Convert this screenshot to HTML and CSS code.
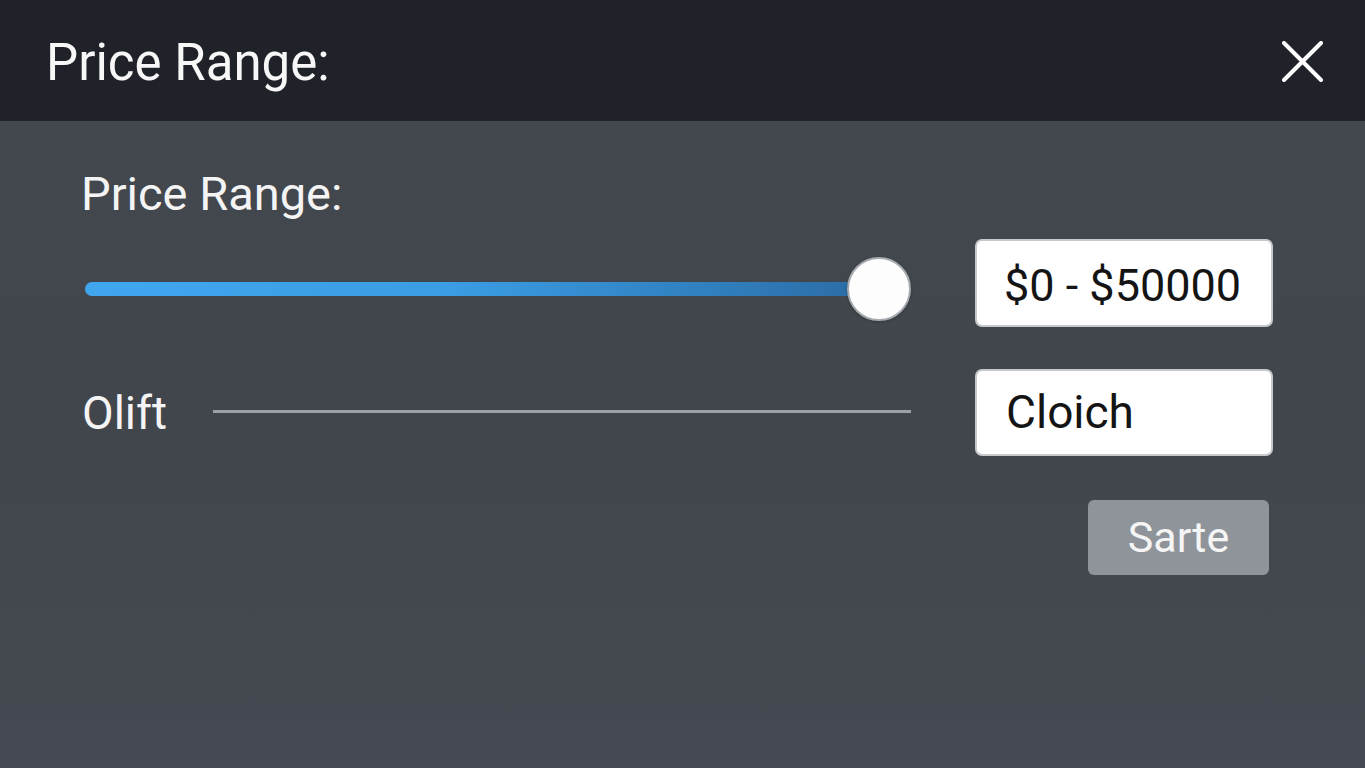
FILE: index.html
```html
<!DOCTYPE html>
<html lang="en">
<head>
<meta charset="utf-8">
<title>Price Range</title>
<link rel="stylesheet" href="styles.css">
</head>
<body>
<div class="dialog">
  <header class="header">
    <h1 class="title">Price Range:</h1>
    <button class="close" aria-label="Close">
      <svg width="41" height="41" viewBox="0 0 41 41"><path d="M2 2 L39 39 M39 2 L2 39" stroke="#ffffff" stroke-width="4" stroke-linecap="round" fill="none"/></svg>
    </button>
  </header>
  <main class="content">
    <div class="section-label">Price Range:</div>
    <div class="row row-slider">
      <div class="slider">
        <div class="track"></div>
        <div class="thumb"></div>
      </div>
      <div class="field field-1">$0 - $50000</div>
    </div>
    <div class="row row-line">
      <div class="line-group">
        <span class="row-label">Olift</span>
        <div class="rule"></div>
      </div>
      <div class="field field-2">Cloich</div>
    </div>
    <div class="actions">
      <button class="btn">Sarte</button>
    </div>
  </main>
</div>
</body>
</html>
```
FILE: styles.css
```css
* { box-sizing: border-box; }
html, body { margin: 0; padding: 0; }
body {
  width: 1365px;
  height: 768px;
  overflow: hidden;
  font-family: Roboto, "Liberation Sans", Arial, sans-serif;
  background: linear-gradient(180deg, #444950 0%, #41464d 55%, #454a52 100%);
}
.dialog { width: 1365px; height: 768px; }
.header {
  height: 121px;
  background: #1f2329;
  display: flex;
  justify-content: space-between;
  align-items: flex-start;
  padding: 33px 42px 0 46px;
}
.title {
  margin: 0;
  font-size: 51px;
  line-height: 60px;
  font-weight: 400;
  color: #f7f7f7;
}
.close {
  margin-top: 8px;
  padding: 0;
  border: 0;
  background: transparent;
  width: 41px;
  height: 41px;
  display: block;
}
.close svg { display: block; }
.content {
  padding: 46px 92px 0 81px;
}
.section-label {
  font-size: 47px;
  line-height: 54px;
  color: #f4f4f4;
  margin-bottom: 18px;
}
.row {
  display: grid;
  grid-template-columns: 830px 298px;
  column-gap: 64px;
}
.row-slider { align-items: start; }
.slider {
  margin-top: 18px;
  height: 64px;
  display: flex;
  align-items: center;
}
.track {
  flex: 1;
  height: 14px;
  margin-left: 4px;
  border-radius: 7px;
  background: linear-gradient(90deg, #40a7ee 0%, #3b9de4 45%, #3182c2 75%, #2b6aa1 100%);
}
.thumb {
  width: 64px;
  height: 64px;
  margin-left: -40px;
  border-radius: 50%;
  background: #fdfdfd;
  border: 2px solid #a7abb0;
  box-shadow: 0 1px 3px rgba(0,0,0,0.25);
}
.field {
  background: #ffffff;
  border: 2px solid #c6c8cb;
  border-radius: 7px;
  color: #141414;
  line-height: 54px;
}
.field-1 { height: 88px; padding-top: 18px; padding-left: 27px; font-size: 45px; }
.field-2 { height: 87px; padding-top: 14px; padding-left: 29px; font-size: 46px; }
.row-line {
  margin-top: 42px;
  align-items: center;
}
.line-group {
  display: flex;
  align-items: center;
}
.row-label {
  font-size: 46px;
  line-height: 54px;
  color: #f4f4f4;
  padding-left: 1px;
}
.rule {
  flex: 1;
  height: 3px;
  margin-left: 46px;
  margin-top: -2px;
  background: #9da1a7;
}
.actions {
  display: flex;
  justify-content: flex-end;
  margin-top: 44px;
  padding-right: 4px;
}
.btn {
  width: 181px;
  height: 75px;
  border: 0;
  border-radius: 6px;
  background: #8f949a;
  color: #f5f5f5;
  font-family: Roboto, "Liberation Sans", Arial, sans-serif;
  font-size: 43px;
  line-height: 50px;
  padding: 0 0 2px 0;
}
```
